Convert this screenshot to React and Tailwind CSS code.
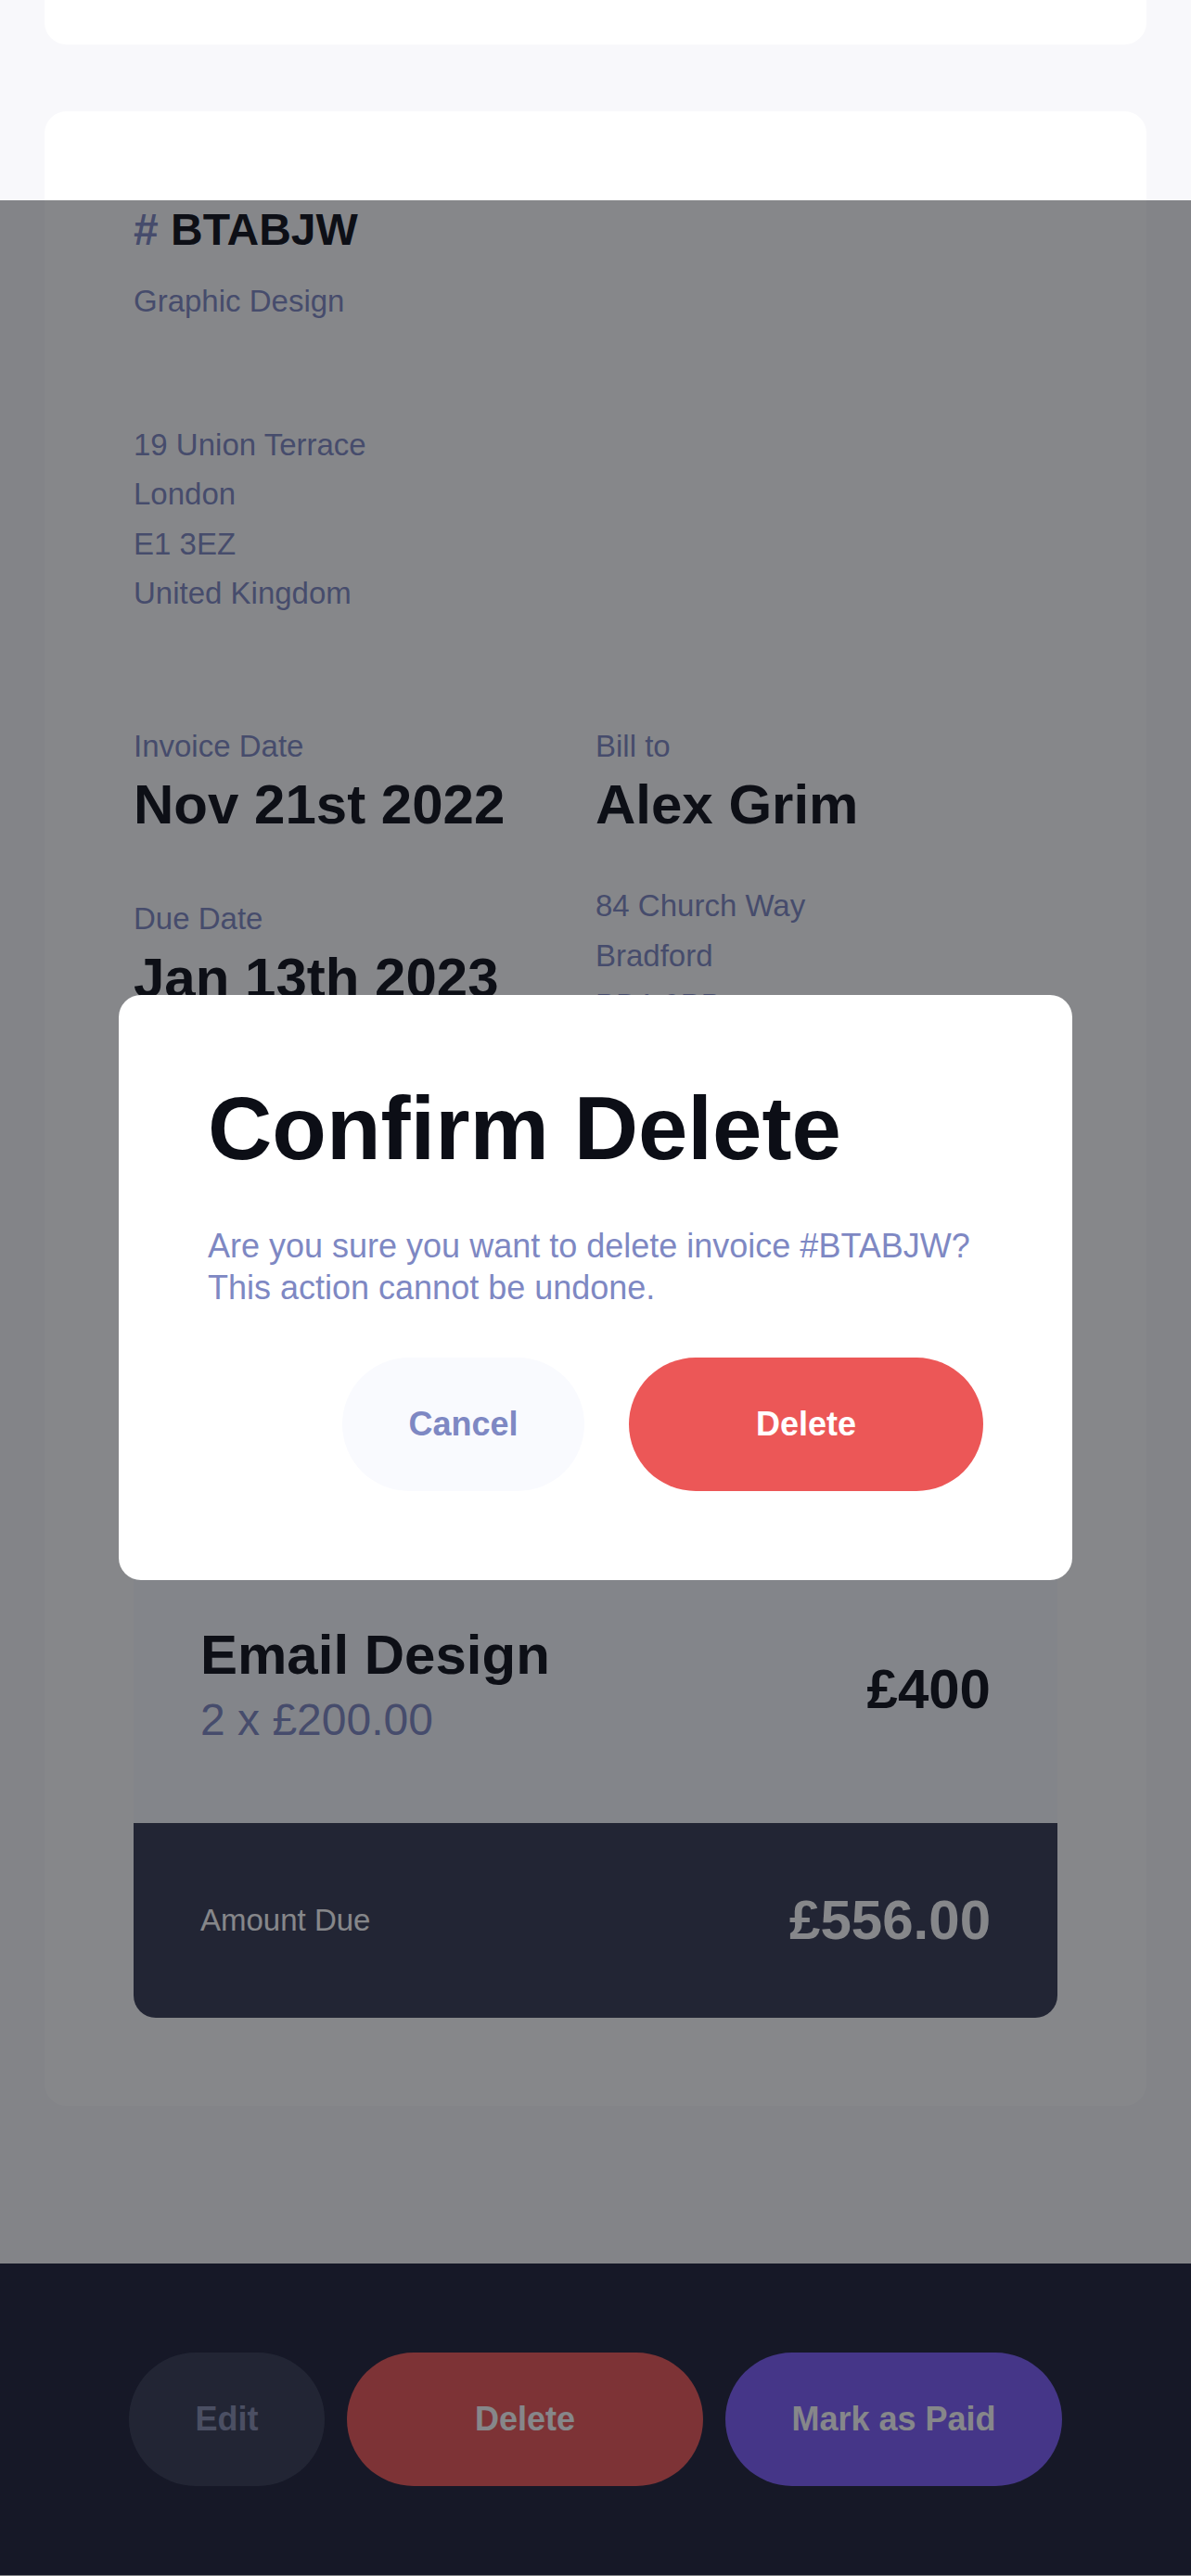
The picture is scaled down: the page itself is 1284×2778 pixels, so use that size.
import React from "react";

const invoice = {
  id: "BTABJW",
  description: "Graphic Design",
  senderAddress: ["19 Union Terrace", "London", "E1 3EZ", "United Kingdom"],
  createdAt: "Nov 21st 2022",
  paymentDue: "Jan 13th 2023",
  clientName: "Alex Grim",
  clientAddress: ["84 Church Way", "Bradford", "BD1 9PB", "United Kingdom"],
  items: [{ name: "Email Design", quantity: 2, price: "£200.00", total: "£400" }],
  total: "£556.00",
};

const Label = ({ children }) => (
  <p className="text-[33px] leading-[53.5px] text-[#7e88c3]">{children}</p>
);

const Big = ({ children }) => (
  <p className="mt-[2px] text-[60px] leading-[69px] font-bold text-[#0c0e16]">{children}</p>
);

const App = () => {
  return (
    <div className="relative min-h-[2778px] bg-[#f8f8fb] font-['Liberation_Sans',Arial,sans-serif]">
      {/* previous card, scrolled mostly off screen */}
      <div className="mx-[48px] h-[48px] rounded-b-[24px] bg-white" />

      {/* invoice card */}
      <div className="mx-[48px] mt-[72px] rounded-[24px] bg-white px-[96px] pt-[100px] pb-[95px]">
        <h1 className="text-[48px] leading-[56px] font-bold text-[#0c0e16]">
          <span className="text-[#7e88c3]">#</span> {invoice.id}
        </h1>
        <p className="mt-[22px] text-[33px] leading-[53.5px] text-[#7e88c3]">{invoice.description}</p>

        <div className="mt-[101px]">
          {invoice.senderAddress.map((line) => (
            <Label key={line}>{line}</Label>
          ))}
        </div>

        <div className="mt-[111px] grid grid-cols-2">
          <div>
            <Label>Invoice Date</Label>
            <Big>{invoice.createdAt}</Big>
            <div className="mt-[62px]">
              <Label>Due Date</Label>
              <Big>{invoice.paymentDue}</Big>
            </div>
          </div>
          <div>
            <Label>Bill to</Label>
            <Big>{invoice.clientName}</Big>
            <div className="mt-[48px]">
              {invoice.clientAddress.map((line) => (
                <Label key={line}>{line}</Label>
              ))}
            </div>
          </div>
        </div>

        {/* items */}
        <div className="mt-[514px] overflow-hidden rounded-[24px]">
          <div className="flex flex-col gap-[48px] bg-[#f9fafe] px-[72px] pt-[72px] pb-[84px]">
            {invoice.items.map((item) => (
              <div key={item.name} className="flex items-center justify-between">
                <div>
                  <p className="text-[60px] leading-[69px] font-bold text-[#0c0e16]">{item.name}</p>
                  <p className="mt-[8px] text-[48px] leading-[55px] text-[#7e88c3]">
                    {item.quantity} x {item.price}
                  </p>
                </div>
                <p className="mt-[10px] text-[60px] leading-[69px] font-bold text-[#0c0e16]">{item.total}</p>
              </div>
            ))}
          </div>
          <div className="flex h-[210px] items-center justify-between bg-[#373b53] px-[72px]">
            <span className="text-[33px] text-white">Amount Due</span>
            <span className="text-[60px] font-bold text-white">{invoice.total}</span>
          </div>
        </div>
      </div>

      {/* action bar */}
      <div className="mt-[170px] flex h-[336px] justify-center gap-[24px] bg-[#1e2139] pt-[96px]">
        <button className="h-[144px] w-[211px] rounded-full bg-[#373b53] text-[36px] font-bold text-[#888eb0]">
          Edit
        </button>
        <button className="h-[144px] w-[384px] rounded-full bg-[#ec5757] text-[36px] font-bold text-white">
          Delete
        </button>
        <button className="h-[144px] w-[363px] rounded-full bg-[#7c5dfa] text-[36px] font-bold text-white">
          Mark as Paid
        </button>
      </div>

      {/* modal backdrop + dialog */}
      <div className="absolute inset-x-0 top-[216px] bottom-0 flex justify-center bg-[#0d0f15]/50 pt-[857px]">
        <div className="h-fit w-[1028px] rounded-[24px] bg-white p-[96px]">
          <h2 className="text-[96px] leading-none font-bold text-[#0c0e16]">Confirm Delete</h2>
          <p className="mt-[56px] text-[36px] leading-[45px] text-[#7e88c3]">
            Are you sure you want to delete invoice #{invoice.id}?
            <br />
            This action cannot be undone.
          </p>
          <div className="mt-[53px] flex justify-end gap-[48px]">
            <button className="h-[144px] w-[261px] rounded-full bg-[#f9fafe] text-[36px] font-bold text-[#7e88c3]">
              Cancel
            </button>
            <button className="h-[144px] w-[382px] rounded-full bg-[#ec5757] text-[36px] font-bold text-white">
              Delete
            </button>
          </div>
        </div>
      </div>
    </div>
  );
};

export default App;
